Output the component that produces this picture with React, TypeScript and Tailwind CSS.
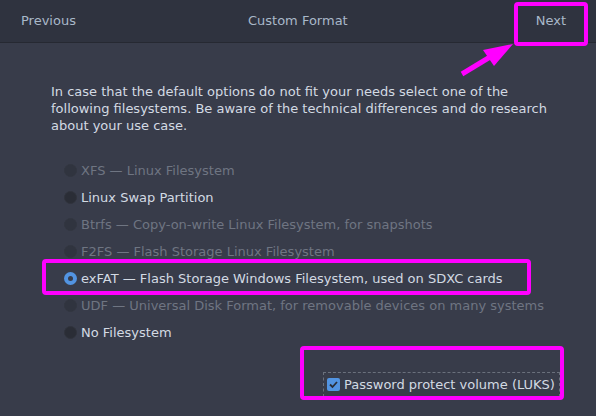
import React from "react";

const options = [
  { label: "XFS — Linux Filesystem", enabled: false },
  { label: "Linux Swap Partition", enabled: true },
  { label: "Btrfs — Copy-on-write Linux Filesystem, for snapshots", enabled: false },
  { label: "F2FS — Flash Storage Linux Filesystem", enabled: false },
  { label: "exFAT — Flash Storage Windows Filesystem, used on SDXC cards", enabled: true, selected: true },
  { label: "UDF — Universal Disk Format, for removable devices on many systems", enabled: false },
  { label: "No Filesystem", enabled: true },
];

export default function App() {
  return (
    <div
      className="relative w-[596px] h-[416px] bg-[#383c4a] overflow-hidden text-[13px]"
      style={{ fontFamily: '"DejaVu Sans", sans-serif' }}
    >
      <div className="h-[43px] bg-[#2f333f] border-b border-[#262932] flex items-center pl-[21px] pr-[30px] text-[#a9b8c9]">
        <span>Previous</span>
        <span className="flex-1 text-center pr-[16px]">Custom Format</span>
        <span>Next</span>
      </div>
      <div className="pl-[51px] pt-[40px] text-[#d3dae3] leading-[17px]">
        <p className="w-[505px]">
          In case that the default options do not fit your needs select one of the following filesystems. Be aware of the technical differences and do research about your use case.
        </p>
        <div className="mt-[23px] flex flex-col">
          {options.map((o) => (
            <div key={o.label} className="h-[27px] flex items-center gap-[4px] pl-[13px]">
              {o.selected ? (
                <span className="w-[13px] h-[13px] rounded-full bg-[#5294e2] flex items-center justify-center">
                  <span className="w-[5px] h-[5px] rounded-full bg-[#383c4a]" />
                </span>
              ) : (
                <span
                  className={
                    o.enabled
                      ? "w-[13px] h-[13px] rounded-full bg-[#2a2d36] border border-[#30333c]"
                      : "w-[13px] h-[13px] rounded-full bg-[#30343f] border border-[#323640]"
                  }
                />
              )}
              <span className={o.enabled ? "text-[#d3dae3]" : "text-[#6f7582]"}>{o.label}</span>
            </div>
          ))}
        </div>
      </div>
      <div className="absolute left-[323px] top-[372px] w-[237px] h-[25px] border border-dashed border-[#6a707c] flex items-center gap-[4px] pl-[3px] text-[#d3dae3]">
        <span className="w-[13px] h-[13px] rounded-[2px] bg-[#5294e2] flex items-center justify-center">
          <svg width="11" height="11" viewBox="0 0 11 11">
            <path d="M2 5.5 L4.5 8 L9 3" stroke="#2b2e37" strokeWidth="1.8" fill="none" />
          </svg>
        </span>
        <span>Password protect volume (LUKS)</span>
      </div>

      {/* annotations */}
      <div className="absolute left-[514px] top-[2px] w-[74px] h-[44px] border-[4px] border-[#ff00ff] rounded-[4px]" />
      <div className="absolute left-[42px] top-[259px] w-[489px] h-[36px] border-[4px] border-[#ff00ff] rounded-[4px]" />
      <div className="absolute left-[300px] top-[346px] w-[264px] h-[54px] border-[4px] border-[#ff00ff] rounded-[4px]" />
      <svg className="absolute left-0 top-0 pointer-events-none" width="596" height="416">
        <line x1="462" y1="74" x2="495" y2="54" stroke="#ff00ff" strokeWidth="5" />
        <polygon points="513,44 483,50 494,66" fill="#ff00ff" />
      </svg>
    </div>
  );
}
